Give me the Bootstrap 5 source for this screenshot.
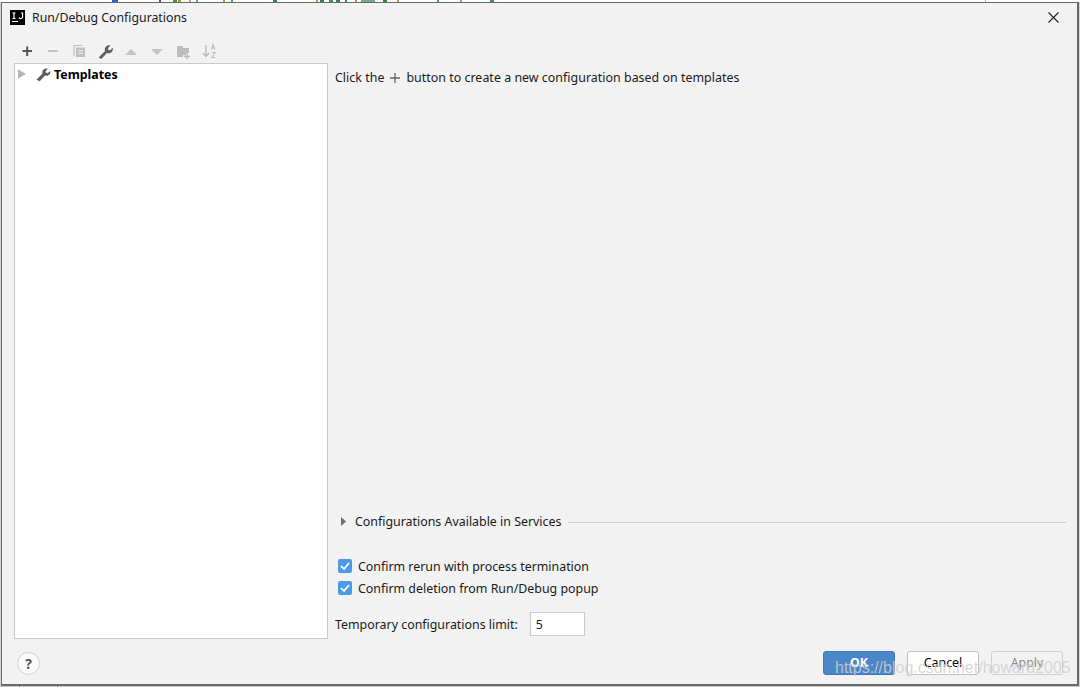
<!doctype html>
<html lang="en">
<head>
<meta charset="utf-8">
<title>Run/Debug Configurations</title>
<link rel="stylesheet" href="https://cdn.jsdelivr.net/npm/bootstrap@5.3.0/dist/css/bootstrap.min.css">
<style>
html,body{height:687px;overflow:hidden;background:#d4d4d4}
body{font-family:"Noto Sans","Open Sans",sans-serif;font-size:12.4px;color:#1a1a1a;position:relative}
.top-strip{height:2px;display:block;margin-bottom:0}
.backdrop-strip{background:#fff}
.dlg{height:684px;margin-left:1px;margin-right:1px;background:#f2f2f2;border:1px solid #696969;border-width:1px 2px 2px 1px}
.title-bar{height:29px;padding-left:8px;padding-right:18px;gap:7px}
.title-text{font-size:12.3px;line-height:16px;margin-top:1px}
.ij-logo{width:15px;height:15px;background:#000;flex:none}
.tool-row{height:31px;padding-left:16px;padding-top:6px;gap:8px}
.tool-row svg{flex:none}
.main-row{flex:1 1 auto;min-height:0;padding-left:12px;padding-right:12px}
.tree-box{width:314px;background:#fff;border:1px solid #c9c9c9;padding:2px 0 0 2px;height:576px;flex:none}
.tree-label{font-weight:700;font-size:12.4px;color:#000;line-height:14px;margin-top:2px;margin-left:3px}
.right-pane{padding-left:7px;height:576px}
.hint{padding-top:5px;line-height:20px;letter-spacing:.03px}
.svc-row{margin-top:auto;padding-left:6px;gap:9px;line-height:16px}
.svc-text{margin-top:2px}
.rule-line{height:1px;background:#cfcfcf;flex:1 1 auto;margin-right:-1px;margin-left:-2px;margin-top:2px}
.chk-row{gap:6px;line-height:20px;padding-left:3px;height:22px}
.chk-text{margin-top:2px}
.chk-box{width:14px;height:14px;background:#4c9be8;border-radius:2px;flex:none}
.check-list{margin-top:25px}
.limit-row{margin-top:13px;height:24px;margin-bottom:3px}
.limit-text{line-height:20px;margin-top:2px}
.limit-input{width:55px;height:24px;background:#fff;border:1px solid #c9c9c9;padding:2px 0 0 5px;margin-left:12px;line-height:20px}
.foot-row{height:44px;padding-left:15px;padding-right:14px;padding-top:2px}
.help-btn{width:23px;height:23px;border:1px solid #cfcfcf;border-radius:50%;background:#fafafa;color:#555;font-weight:700;font-size:14px;line-height:21px;text-align:center}
.act-btn{width:72px;height:24px;font-size:12.4px;line-height:22px;padding:0;border-radius:3px;border:1px solid #bfbfbf;background:#fff;color:#000;text-align:center}
.act-ok{background:#4a86c8;border-color:#3e78b8;color:#fff;font-weight:700}
.act-off{background:#f2f2f2;border-color:#cfcfcf;color:#8c8c8c}
.btn-gap{gap:12px}
.wm{position:absolute;left:835px;top:657px;font-family:"Liberation Sans",sans-serif;font-size:16px;line-height:22px;color:rgba(208,208,208,.85);white-space:nowrap}
.bottom-strip{height:1px;background:linear-gradient(90deg,#c8c8c8 19px,#8c8c8c 19px,#8c8c8c 20px,#c8c8c8 20px,#c8c8c8 57px,#8c8c8c 57px,#8c8c8c 58px,#c8c8c8 58px)}
</style>
</head>
<body>
<svg class="top-strip backdrop-strip" width="1080" height="2" aria-hidden="true">
<rect x="112" width="6" height="2" fill="#2a62d8"/><rect x="159" width="2" height="2" fill="#a0289c"/><rect x="173" width="4" height="2" fill="#3a9a4a"/><rect x="178" width="3" height="2" fill="#b0a030"/><rect x="189" width="2" height="2" fill="#b8b060"/><rect x="196" width="2" height="2" fill="#50a8c0"/><rect x="223" width="2" height="2" fill="#a8a030"/><rect x="231" width="2" height="2" fill="#30a0b0"/><rect x="273" width="4" height="2" fill="#2a8a5a"/><rect x="316" width="2" height="2" fill="#b0a050"/><rect x="320" width="4" height="2" fill="#2a8a5a"/><rect x="329" width="4" height="2" fill="#3a9a4a"/><rect x="336" width="4" height="2" fill="#2a8a5a"/><rect x="345" width="2" height="2" fill="#3a8a5a"/><rect x="355" width="2" height="2" fill="#a0a040"/><rect x="361" width="14" height="2" fill="#70a890"/><rect x="383" width="4" height="2" fill="#2a8a4a"/><rect x="397" width="2" height="2" fill="#b0a040"/><rect x="437" width="2" height="2" fill="#50a090"/><rect x="460" width="2" height="2" fill="#70a8a0"/><rect x="490" width="4" height="2" fill="#3a9a4a"/><rect x="985" width="1" height="2" fill="#bbb"/>
</svg>
<div class="dlg d-flex flex-column">
  <div class="title-bar d-flex align-items-center">
    <svg class="ij-logo" viewBox="0 0 15 15" aria-hidden="true"><rect width="15" height="15" fill="#000"/><rect x="2" y="11" width="6" height="1" fill="#fff"/><path d="M2.500 3h3M4 3v5.500M2.500 8.500h3M11 3h1.600v3.800a1.900 1.900 0 0 1-3.600.7" fill="none" stroke="#fff" stroke-width="1.200"/></svg>
    <span class="title-text">Run/Debug Configurations</span>
    <svg class="ms-auto" width="11" height="11" viewBox="0 0 11 11" aria-hidden="true"><path d="M.5.500l10 10M10.500.500l-10 10" stroke="#222" stroke-width="1.100"/></svg>
  </div>
  <div class="tool-row d-flex align-items-center">
    <svg width="18" height="18" viewBox="0 0 18 18" aria-hidden="true"><path d="M4.500 9h9.500M9.200 4.500v9.500" stroke="#555" stroke-width="2"/></svg>
    <svg width="18" height="18" viewBox="0 0 18 18" aria-hidden="true"><path d="M4 9h10" stroke="#c4c4c4" stroke-width="2"/></svg>
    <svg width="18" height="18" viewBox="0 0 18 18" aria-hidden="true"><path d="M4 14V3.500h8" fill="none" stroke="#c0c0c0" stroke-width="1.200"/><rect x="6" y="5.500" width="9" height="9.500" fill="#c0c0c0"/><path d="M8 8.500h5M8 11h5" stroke="#f2f2f2" stroke-width="1"/></svg>
    <svg width="18" height="18" viewBox="0 0 18 18" aria-hidden="true"><path d="M2.600 15.400 9 9c-.7-2 0-4.500 2.500-5.500 1-.4 2-.4 3 0l-2.500 2.500.3 2 2 .3 2.300-2.500c.4 1 .3 2.200-.2 3.100-1 2-3.400 2.800-5.500 2.100l-5.600 5.900z" fill="#5f5f5f"/></svg>
    <svg width="18" height="18" viewBox="0 0 18 18" aria-hidden="true"><path d="M3 13h12L9 7z" fill="#c4c4c4"/></svg>
    <svg width="18" height="18" viewBox="0 0 18 18" aria-hidden="true"><path d="M3 7h12l-6 6z" fill="#c4c4c4"/></svg>
    <svg width="18" height="18" viewBox="0 0 18 18" aria-hidden="true"><path d="M3 4h5l1.500 2H15v5h-3v2H9v2H3z" fill="#bcbcbc"/><path d="M10 14.500h6M13 11.500v6" stroke="#bcbcbc" stroke-width="1.600"/></svg>
    <svg width="18" height="18" viewBox="0 0 18 18" aria-hidden="true"><path d="M6 3v11M3 11l3 3.500 3-3.500" fill="none" stroke="#bcbcbc" stroke-width="1.400"/><path d="M11.500 7.500 13 2.500l1.800 5M12 6h2.500M11.800 10.500h3.400l-3.400 5h3.600" fill="none" stroke="#bcbcbc" stroke-width="1.100"/></svg>
  </div>
  <div class="main-row d-flex">
    <div class="tree-box d-flex align-items-start align-self-start">
      <div class="d-flex align-items-center">
        <svg width="18" height="16" viewBox="0 0 18 16" aria-hidden="true"><path d="M1 3.200v9.300L9 8z" fill="#b4b4b4"/></svg>
        <svg width="16" height="16" viewBox="0 0 18 18" aria-hidden="true"><path d="M1.600 15.400 8.500 8.500c-.7-2 0-4.500 2.500-5.500 1-.4 2.500-.4 3.500 0L12 5.500l.3 2.200 2.200.3 2.500-2.500c.4 1 .3 2.200-.2 3.100-1 2-3.400 2.800-5.500 2.100l-6 6.400z" fill="#5f5f5f"/></svg>
        <span class="tree-label">Templates</span>
      </div>
    </div>
    <div class="right-pane flex-grow-1 d-flex flex-column">
      <div class="hint d-flex align-items-center">
        <span>Click the</span>
        <svg class="mx-1" width="14" height="14" viewBox="0 0 14 14" aria-hidden="true"><path d="M2 7h10M7 2v10" stroke="#666" stroke-width="1.300"/></svg>
        <span>button to create a new configuration based on templates</span>
      </div>
      <div class="svc-row d-flex align-items-center">
        <svg width="5" height="9" viewBox="0 0 5 9" aria-hidden="true"><path d="M0 0v9l5-4.500z" fill="#6e6e6e"/></svg>
        <span class="svc-text">Configurations Available in Services</span>
        <span class="rule-line"></span>
      </div>
      <div class="check-list">
        <div class="chk-row d-flex align-items-center">
          <svg class="chk-box" viewBox="0 0 14 14" aria-hidden="true"><path d="M3 7.200 6 10l5-6" fill="none" stroke="#fff" stroke-width="1.800"/></svg>
          <span class="chk-text">Confirm rerun with process termination</span>
        </div>
        <div class="chk-row d-flex align-items-center">
          <svg class="chk-box" viewBox="0 0 14 14" aria-hidden="true"><path d="M3 7.200 6 10l5-6" fill="none" stroke="#fff" stroke-width="1.800"/></svg>
          <span class="chk-text">Confirm deletion from Run/Debug popup</span>
        </div>
      </div>
      <div class="limit-row d-flex align-items-center">
        <span class="limit-text">Temporary configurations limit:</span>
        <span class="limit-input">5</span>
      </div>
    </div>
  </div>
  <div class="foot-row d-flex align-items-center justify-content-between">
    <div class="help-btn">?</div>
    <div class="d-flex btn-gap">
      <button type="button" class="act-btn act-ok">OK</button>
      <button type="button" class="act-btn">Cancel</button>
      <button type="button" class="act-btn act-off">Apply</button>
    </div>
  </div>
</div>
<div class="bottom-strip"></div>
<div class="wm">https://blog.csdn.net/howard2005</div>
</body>
</html>
